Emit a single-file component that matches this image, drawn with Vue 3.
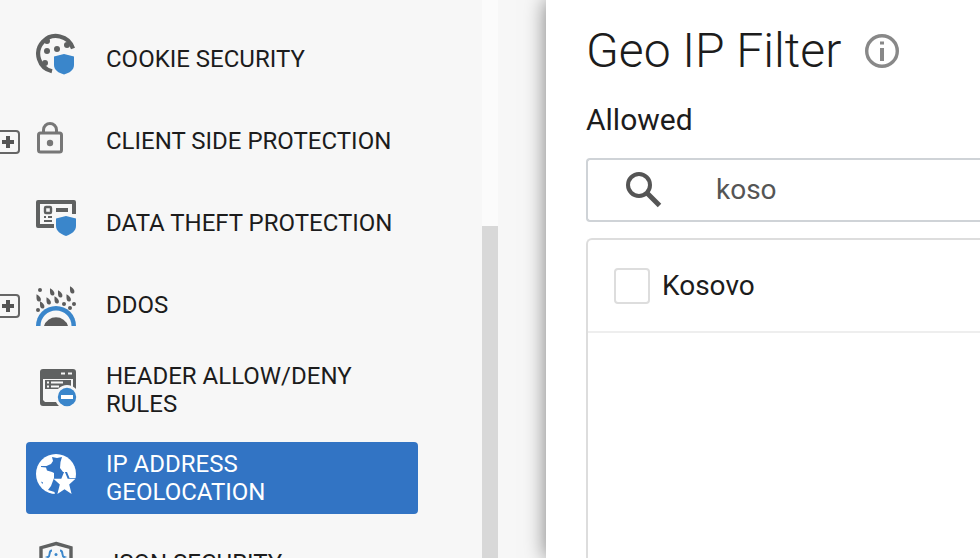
<script setup>
import { ref } from 'vue'

const items = [
  { id: 'cookie', label: 'COOKIE SECURITY' },
  { id: 'lock', label: 'CLIENT SIDE PROTECTION', expandable: true },
  { id: 'theft', label: 'DATA THEFT PROTECTION' },
  { id: 'ddos', label: 'DDOS', expandable: true },
  { id: 'header', label: 'HEADER ALLOW/DENY RULES' },
  { id: 'geo', label: 'IP ADDRESS GEOLOCATION', active: true },
  { id: 'json', label: 'JSON SECURITY' },
]

const drops = [
  [16, 20], [24, 22], [36, 18], [2.5, 26], [12.5, 29], [20.5, 28], [32.500, 26], [6, 33],
]
const dots = [[4, 18], [2, 38], [28, 32], [38, 32], [34, 36]]

const query = ref('koso')
const checked = ref(false)
</script>

<template>
  <div class="page">
    <aside class="sidebar">
      <nav class="menu" aria-label="Security policies">
        <div v-for="item in items" :key="item.id" class="row">
          <div class="gutter">
            <button v-if="item.expandable" class="toggle" type="button" :aria-label="'Expand ' + item.label">
              <svg viewBox="0 0 12 12" width="12" height="12"><path d="M4 0h4v4h4v4H8v4H4V8H0V4h4z" fill="#555" /></svg>
            </button>
          </div>
          <a href="#" class="link" :class="{ active: item.active }" :aria-current="item.active ? 'page' : undefined">
            <svg class="icon" viewBox="0 0 44 60" width="44" height="60" aria-hidden="true">
              <g v-if="item.id === 'cookie'">
                <path d="M16 45.200A17.800 17.800 0 1 1 37 22.500" fill="none" stroke="#5f6161" stroke-width="4.200" />
                <g fill="#5f6161">
                  <circle cx="11" cy="15" r="3" /><circle cx="31" cy="19" r="3" /><circle cx="21" cy="23" r="3" />
                  <circle cx="11" cy="25" r="3" /><circle cx="9" cy="37" r="3" />
                </g>
                <path d="M28 28l10 2.600v8.400c0 5-4.500 8-10 9.500-5.500-1.500-10-4.500-10-9.500v-8.400z" fill="#3a86cb" />
              </g>
              <g v-else-if="item.id === 'lock'">
                <path d="M7.500 25v-3a6.500 6.500 0 0 1 13 0v3" fill="none" stroke="#777" stroke-width="3" />
                <rect x="2.500" y="25" width="23" height="19" rx="2" fill="none" stroke="#777" stroke-width="3" />
                <circle cx="14" cy="35" r="3.200" fill="#777" />
              </g>
              <g v-else-if="item.id === 'theft'">
                <path d="M18 36H2V12h36v12" fill="none" stroke="#5f6161" stroke-width="4" stroke-linejoin="round" />
                <rect x="9" y="17" width="6" height="6" rx="1" fill="none" stroke="#5f6161" stroke-width="2.400" />
                <path d="M8 27h2M12 27h4M8 31h8" fill="none" stroke="#5f6161" stroke-width="2" />
                <path d="M20 18h12v4H20z" fill="#5f6161" />
                <path d="M30 26l10 2.600v7.400c0 5-4.500 8-10 10-5.500-2-10-5-10-10v-7.400z" fill="#3a86cb" />
              </g>
              <g v-else-if="item.id === 'ddos'">
                <path
                  v-for="(d, i) in drops" :key="i"
                  :transform="`translate(${d[0]} ${d[1]})`"
                  d="M-2-3.800C1-2.500 2.800 0 2.400 2C2 4-.6 4-1.400 2.500C-2.200 1-2-1.500-2-3.800z" fill="#5c5c5c"
                />
                <circle v-for="(d, i) in dots" :key="'d' + i" :cx="d[0]" :cy="d[1]" r="2" fill="#5c5c5c" />
                <path d="M0 54a20 20 0 0 1 40 0z" fill="#3a86cb" />
                <path d="M4.500 54a15.500 15.500 0 0 1 31 0z" fill="#f7f7f7" />
                <path d="M8 54a12.500 12 0 0 1 24 0z" fill="#5c5c5c" />
              </g>
              <g v-else-if="item.id === 'header'">
                <path d="M7 15h30a3 3 0 0 1 3 3v28a3 3 0 0 1-3 3 3 3 0 0 1-3 3H7a3 3 0 0 1-3-3V18a3 3 0 0 1 3-3z" fill="#5f6161" />
                <path d="M25 18.500h4v2h-4zM32 18.500h4v2h-4zM7 25h30v23H9l-2-2z" fill="#f7f7f7" />
                <path d="M9 26h26v9H9z" fill="#5f6161" />
                <path d="M11 27.500h2v2h-2zM15 27.500h12v2H15zM11 31.500h2v2h-2zM15 31.500h8v2h-8z" fill="#f7f7f7" />
                <circle cx="31" cy="43" r="12" fill="#f7f7f7" />
                <circle cx="31" cy="43" r="9.200" fill="#3a86cb" />
                <path d="M25 41h12v4H25z" fill="#fff" />
              </g>
              <g v-else-if="item.id === 'geo'">
                <circle cx="20" cy="32" r="20" fill="#fff" />
                <path d="M16 15l5 1 5-1-1.500 5-.5 6 3 4h4l2.500 6H42v17H19l-.5-3-6.500-2 3-4 3-8v-5l-2-1-5-1.500-1-3-5-.5v-1h5.500L15 22l2-3z" fill="#3274c4" />
                <path d="M28.500 29l3.200 7.800H39.500l-6.300 5.700 2.400 9.500-7.100-4.700-7.100 4.700 2.400-9.500-6.300-5.700h7.800z" fill="#fff" />
                <path d="M5 39.500l2 1v1H6z" fill="#3274c4" />
              </g>
              <g v-else>
                <path d="M20 13.500l15 4.200v13.300c0 9-6 13-15 17C11 44 5 40 5 31V17.700z" fill="none" stroke="#5f6161" stroke-width="3.400" />
                <path d="M16 20.500c-4 0-1 5.500-4 6.500 3 1 0 7 4 7M24 20.500c4 0 1 5.500 4 6.500-3 1 0 7-4 7" fill="none" stroke="#3a86cb" stroke-width="2" />
                <circle cx="20" cy="24.500" r="1.500" fill="#3a86cb" /><circle cx="20" cy="30" r="1.500" fill="#3a86cb" />
              </g>
            </svg>
            <span class="label">{{ item.label }}</span>
          </a>
        </div>
      </nav>
      <div class="track"><div class="thumb"></div></div>
    </aside>

    <main class="panel">
      <header class="heading">
        <h1>Geo IP Filter</h1>
        <button class="info" type="button" aria-label="About Geo IP Filter">
          <svg viewBox="0 0 34 34" width="34" height="34">
            <circle cx="17" cy="17" r="15.300" fill="none" stroke="#888" stroke-width="3.400" />
            <path d="M15 7.500h4v3h-4zM15 14h4v13h-4z" fill="#888" />
          </svg>
        </button>
      </header>
      <label class="caption" for="search">Allowed</label>
      <div class="search">
        <svg viewBox="0 0 36 36" width="36" height="36" aria-hidden="true">
          <circle cx="13" cy="13" r="11" fill="none" stroke="#555" stroke-width="4" />
          <path d="M21.500 21.500l12 12" stroke="#555" stroke-width="5" />
        </svg>
        <input id="search" v-model="query" type="text" />
      </div>
      <div class="list">
        <label class="option">
          <input v-model="checked" type="checkbox" />
          <span>Kosovo</span>
        </label>
      </div>
    </main>
  </div>
</template>

<style>
body {
  margin: 0;
}
</style>

<style scoped>
.page {
  display: flex;
  height: 100vh;
  overflow: hidden;
  background: #f7f7f7;
  font-family: Roboto, sans-serif;
  color: #1c1c1c;
}
.sidebar {
  display: flex;
  flex: 0 0 498px;
  margin-right: 48px;
}
.menu {
  flex: 1;
  display: flex;
  flex-direction: column;
  gap: 16px;
  padding: 26px 64px 0 0;
}
.row {
  display: flex;
  flex-shrink: 0;
}
.gutter {
  flex: 0 0 26px;
  display: flex;
  align-items: center;
  padding-top: 2px;
}
.toggle {
  display: flex;
  align-items: center;
  justify-content: center;
  box-sizing: border-box;
  flex: 0 0 24px;
  height: 24px;
  margin-left: -4px;
  padding: 0;
  border: 2px solid #666;
  border-radius: 4px;
  background: none;
}
.toggle svg {
  flex: none;
}
.link {
  flex: 1;
  display: flex;
  gap: 26px;
  min-height: 66px;
  box-sizing: border-box;
  padding: 0 16px 0 10px;
  border-radius: 4px;
  color: #1c1c1c;
  text-decoration: none;
}
.icon {
  flex: none;
}
.label {
  align-self: center;
  padding: 8px 0;
  font-size: 24px;
  line-height: 28px;
}
.active {
  background: #3274c4;
  color: #fff;
}
.track {
  flex: 0 0 16px;
  background: #fbfbfb;
  padding-top: 226px;
  box-sizing: border-box;
}
.thumb {
  height: 100%;
  background: #d8d8d8;
}
.panel {
  flex: 1;
  min-width: 0;
  display: flex;
  flex-direction: column;
  padding: 20px 0 0 40px;
  background: #fff;
  box-shadow: 0 0 20px rgba(0, 0, 0, 0.5);
  clip-path: inset(0 0 0 -40px);
}
.heading {
  display: flex;
  align-items: center;
  gap: 24px;
}
h1 {
  margin: 0;
  font-size: 48px;
  line-height: 62px;
  font-weight: 300;
}
.info {
  display: flex;
  padding: 0;
  border: 0;
  background: none;
}
.caption {
  margin: 20px 0;
  font-size: 30px;
  line-height: 36px;
}
.search {
  display: flex;
  align-items: center;
  gap: 54px;
  height: 60px;
  padding-left: 38px;
  border: 2px solid #cfd3d7;
  border-right: 0;
  border-radius: 4px 0 0 4px;
}
.search input {
  flex: 1;
  min-width: 0;
  padding: 0;
  border: 0;
  outline: 0;
  background: none;
  font: 28px/36px Roboto, sans-serif;
  color: #555;
}
.list {
  flex: 1;
  margin-top: 16px;
  border: 2px solid #ddd;
  border-width: 2px 0 0 2px;
  border-radius: 6px 0 0 0;
}
.option {
  display: flex;
  align-items: center;
  gap: 12px;
  height: 91px;
  padding-left: 26px;
  border-bottom: 2px solid #eee;
  font-size: 28px;
  line-height: 36px;
}
.option input {
  appearance: none;
  width: 36px;
  height: 36px;
  margin: 0;
  border: 2px solid #ddd;
  border-radius: 4px;
  background: #fff;
}
.option input:checked {
  background: #3274c4;
}
</style>
